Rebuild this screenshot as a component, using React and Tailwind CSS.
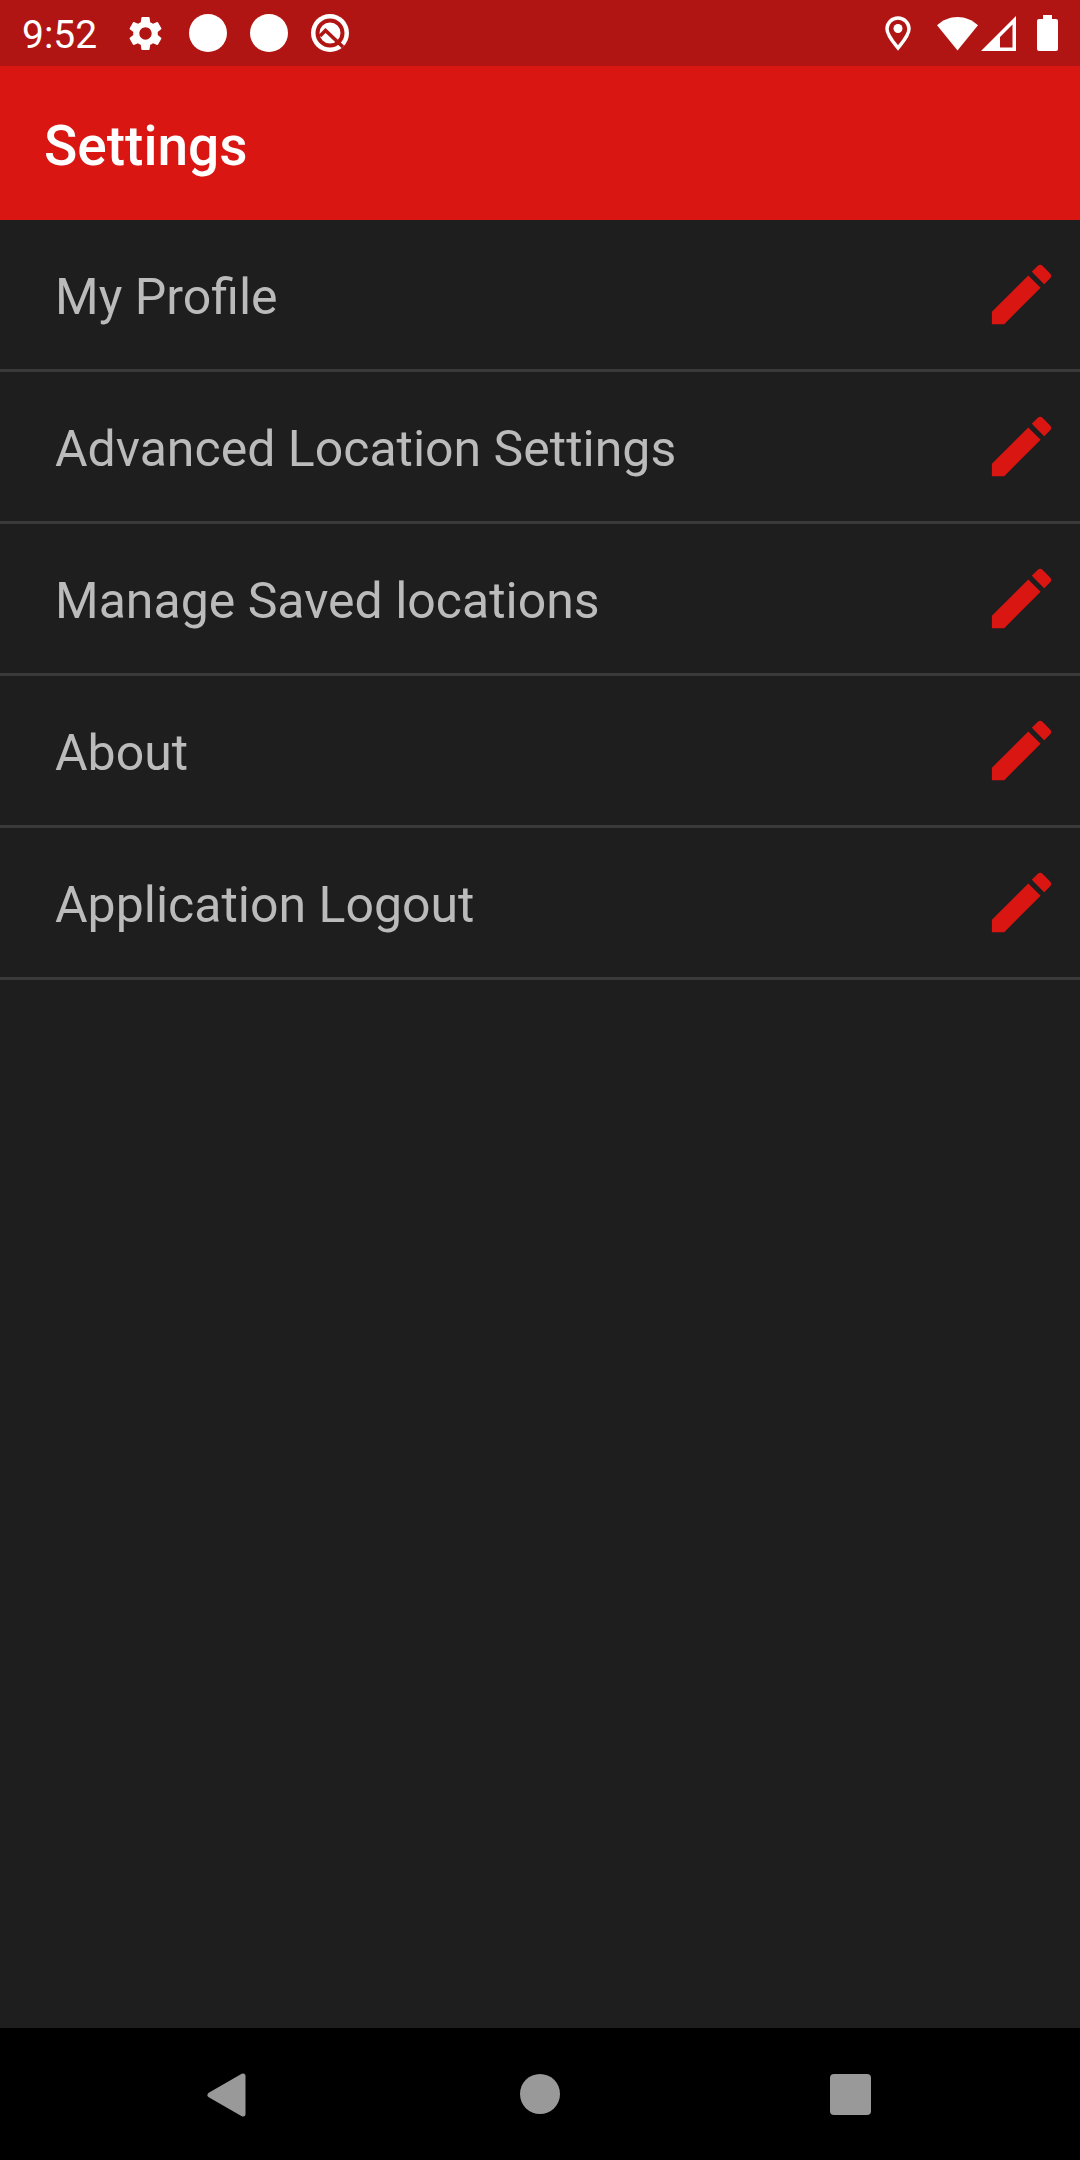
import { MdEdit, MdSettings } from "react-icons/md";

const items = [
  { id: "profile", label: "My Profile" },
  { id: "location", label: "Advanced Location Settings" },
  { id: "saved", label: "Manage Saved locations" },
  { id: "about", label: "About" },
  { id: "logout", label: "Application Logout" },
];

function DebugIcon() {
  return (
    <svg width="38" height="38" viewBox="0 0 38 38" fill="none">
      <circle cx="19" cy="19" r="19" fill="#fff" />
      <circle cx="19" cy="19" r="12.5" stroke="#b01513" strokeWidth="4" />
      <path d="M9 22l5.500-5.500L32 33" stroke="#b01513" strokeWidth="3.500" />
    </svg>
  );
}

function PinIcon() {
  return (
    <svg width="26" height="35" viewBox="0 0 26 35" fill="none">
      <path
        d="M13 2C6.8 2 2 6.8 2 12.8 2 19.5 9 27 13 32c4-5 11-12.500 11-19.200C24 6.800 19.200 2 13 2z"
        stroke="#fff"
        strokeWidth="3.500"
      />
      <circle cx="13" cy="12.500" r="4.500" fill="#fff" />
    </svg>
  );
}

function WifiIcon() {
  return (
    <svg width="41" height="35" viewBox="0 0 42 35" fill="#fff">
      <path d="M21 35L0 9C6 3.500 13 .5 21 .5S36 3.500 42 9z" />
    </svg>
  );
}

function SignalIcon() {
  return (
    <svg width="35" height="35" viewBox="0 0 35 35" fill="#fff">
      <path fillRule="evenodd" d="M35 0v35H0zM31.500 8.500L19 21v10.500h12.500z" />
    </svg>
  );
}

function BatteryIcon() {
  return (
    <svg width="21" height="36" viewBox="0 0 21 36" fill="#fff">
      <path d="M6 0h9v4h4a2 2 0 0 1 2 2v28a2 2 0 0 1-2 2H2a2 2 0 0 1-2-2V6a2 2 0 0 1 2-2h4z" />
    </svg>
  );
}

function StatusBar() {
  return (
    <div className="flex h-[66px] items-center justify-between bg-[#b01513] px-[22px] text-white">
      <div className="flex items-center">
        <span className="mr-7 pt-1 text-[39px] leading-[44px]">9:52</span>
        <div className="flex items-center gap-[23px]">
          <MdSettings size={41} />
          <span className="size-[38px] rounded-full bg-white" />
          <span className="size-[38px] rounded-full bg-white" />
          <DebugIcon />
        </div>
      </div>
      <div className="flex items-center">
        <PinIcon />
        <span className="ml-[26px] flex items-center gap-[3px]">
          <WifiIcon />
          <SignalIcon />
        </span>
        <span className="ml-[21px]">
          <BatteryIcon />
        </span>
      </div>
    </div>
  );
}

function NavBar() {
  return (
    <nav className="flex h-[132px] items-center justify-center gap-[230px] bg-black">
      <button aria-label="Back" className="flex w-20 justify-center">
        <svg width="48" height="48" viewBox="0 0 48 48">
          <path
            d="M37 6v38L4 25z"
            fill="#999"
            stroke="#999"
            strokeWidth="5"
            strokeLinejoin="round"
          />
        </svg>
      </button>
      <button aria-label="Home" className="flex w-20 justify-center">
        <span className="size-10 rounded-full bg-[#999]" />
      </button>
      <button aria-label="Recent apps" className="flex w-20 justify-center">
        <span className="size-[41px] rounded-[4px] bg-[#999]" />
      </button>
    </nav>
  );
}

export default function App() {
  return (
    <div className="flex min-h-screen flex-col bg-[#1e1e1e] font-['Roboto',sans-serif]">
      <StatusBar />
      <header className="flex h-[154px] items-center bg-[#d91612] px-11 pt-1.5">
        <h1 className="text-[55px] font-medium leading-[64px] text-white">
          Settings
        </h1>
      </header>

      <main className="flex-1">
        {items.map((item) => (
          <button
            key={item.id}
            className="flex h-[152px] w-full items-center justify-between border-b-[3px] border-[#3a3a3a] pl-[55px] pr-[19px] text-left"
          >
            <span className="pt-1 text-[50px] leading-[60px] text-[#bbb]">
              {item.label}
            </span>
            <MdEdit size={79} className="shrink-0 text-[#d91612]" />
          </button>
        ))}
      </main>

      <NavBar />
    </div>
  );
}
